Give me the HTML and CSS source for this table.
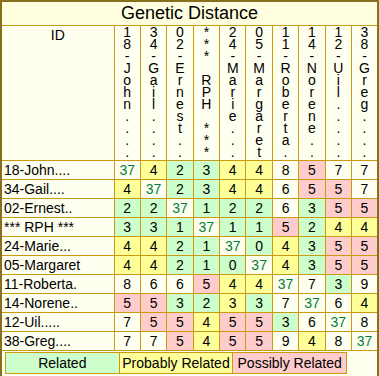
FILE: index.html
```html
<!DOCTYPE html>
<html>
<head>
<meta charset="utf-8">
<link rel="stylesheet" href="styles.css">
</head>
<body>
<table class="gd">
<colgroup><col class="c-id"><col span="10" class="c-n"></colgroup>
<tr><th colspan="11" class="title">Genetic Distance</th></tr>
<tr class="hdr">
<th class="id">ID</th>
<th class="v">1<br>8<br>-<br>J<br>o<br>h<br>n<br>.<br>.<br>.<br>.</th>
<th class="v">3<br>4<br>-<br>G<br>a<br>i<br>l<br>.<br>.<br>.<br>.</th>
<th class="v">0<br>2<br>-<br>E<br>r<br>n<br>e<br>s<br>t<br>.<br>.</th>
<th class="v">*<br>*<br>*<br>&nbsp;<br>R<br>P<br>H<br>&nbsp;<br>*<br>*<br>*</th>
<th class="v">2<br>4<br>-<br>M<br>a<br>r<br>i<br>e<br>.<br>.<br>.</th>
<th class="v">0<br>5<br>-<br>M<br>a<br>r<br>g<br>a<br>r<br>e<br>t</th>
<th class="v">1<br>1<br>-<br>R<br>o<br>b<br>e<br>r<br>t<br>a<br>.</th>
<th class="v">1<br>4<br>-<br>N<br>o<br>r<br>e<br>n<br>e<br>.<br>.</th>
<th class="v">1<br>2<br>-<br>U<br>i<br>l<br>.<br>.<br>.<br>.<br>.</th>
<th class="v">3<br>8<br>-<br>G<br>r<br>e<br>g<br>.<br>.<br>.<br>.</th>
</tr>
<tr><td class="name">18-John....</td><td class="self">37</td><td class="p">4</td><td class="r">2</td><td class="r">3</td><td class="p">4</td><td class="p">4</td><td>8</td><td class="s">5</td><td>7</td><td>7</td></tr>
<tr><td class="name">34-Gail....</td><td class="p">4</td><td class="self">37</td><td class="r">2</td><td class="r">3</td><td class="p">4</td><td class="p">4</td><td>6</td><td class="s">5</td><td class="s">5</td><td>7</td></tr>
<tr><td class="name">02-Ernest..</td><td class="r">2</td><td class="r">2</td><td class="self">37</td><td class="r">1</td><td class="r">2</td><td class="r">2</td><td>6</td><td class="r">3</td><td class="s">5</td><td class="s">5</td></tr>
<tr><td class="name">*** RPH ***</td><td class="r">3</td><td class="r">3</td><td class="r">1</td><td class="self">37</td><td class="r">1</td><td class="r">1</td><td class="s">5</td><td class="r">2</td><td class="p">4</td><td class="p">4</td></tr>
<tr><td class="name">24-Marie...</td><td class="p">4</td><td class="p">4</td><td class="r">2</td><td class="r">1</td><td class="self">37</td><td class="r">0</td><td class="p">4</td><td class="r">3</td><td class="s">5</td><td class="s">5</td></tr>
<tr><td class="name">05-Margaret</td><td class="p">4</td><td class="p">4</td><td class="r">2</td><td class="r">1</td><td class="r">0</td><td class="self">37</td><td class="p">4</td><td class="r">3</td><td class="s">5</td><td class="s">5</td></tr>
<tr><td class="name">11-Roberta.</td><td>8</td><td>6</td><td>6</td><td class="s">5</td><td class="p">4</td><td class="p">4</td><td class="self">37</td><td>7</td><td class="r">3</td><td>9</td></tr>
<tr><td class="name">14-Norene..</td><td class="s">5</td><td class="s">5</td><td class="r">3</td><td class="r">2</td><td class="p">3</td><td class="r">3</td><td>7</td><td class="self">37</td><td>6</td><td class="p">4</td></tr>
<tr><td class="name">12-Uil.....</td><td>7</td><td class="s">5</td><td class="s">5</td><td class="p">4</td><td class="s">5</td><td class="s">5</td><td class="r">3</td><td>6</td><td class="self">37</td><td>8</td></tr>
<tr><td class="name">38-Greg....</td><td>7</td><td>7</td><td class="s">5</td><td class="p">4</td><td class="s">5</td><td class="s">5</td><td>9</td><td class="p">4</td><td>8</td><td class="self">37</td></tr>
<tr><td colspan="11" class="legend-cell">
<table class="legend">
<tr><td class="r">Related</td><td class="p">Probably Related</td><td class="s">Possibly Related</td></tr>
</table>
</td></tr>
</table>
</body>
</html>
```

FILE: styles.css
```css
html, body {
  margin: 0;
  padding: 0;
  background: #ffffff;
}
.gd {
  width: 379px;
  border-collapse: collapse;
  table-layout: fixed;
  border: 2px solid #86701e;
  background: #fffff0;
  font-family: "Liberation Sans", Arial, sans-serif;
  font-size: 14px;
  color: #000;
}
.c-id { width: 113px; }
.gd > tbody > tr > td,
.gd > tbody > tr > th {
  border: 1px solid #cc9a10;
  padding: 0;
}
.title {
  background: #ffffe0;
  font-size: 18px;
  font-weight: normal;
  height: 23px;
  line-height: 23px;
  text-align: center;
}
.hdr th {
  font-weight: normal;
  vertical-align: top;
  text-align: center;
  padding-top: 3px;
  line-height: 12px;
  height: 133px;
}
.hdr .id {
  line-height: 16px;
  padding-top: 1px;
}
.gd td {
  height: 18px;
  line-height: 18px;
  text-align: center;
}
.gd td.name {
  text-align: left;
  padding-left: 2px;
  white-space: nowrap;
  overflow: hidden;
}
.r { background: #ccffcc; }
.p { background: #ffff99; }
.s { background: #ffcccc; }
.self { color: #008040; }
.gd td.legend-cell {
  text-align: left;
  padding: 1px 0 3px 3px;
  height: auto;
}
.legend {
  width: 342px;
  border-collapse: collapse;
  table-layout: fixed;
  font-size: 14px;
  border: 1px solid #cc9a10;
}
.legend td {
  border: 1px solid #cc9a10;
  height: 18px;
  line-height: 18px;
  text-align: center;
  white-space: nowrap;
}
```
